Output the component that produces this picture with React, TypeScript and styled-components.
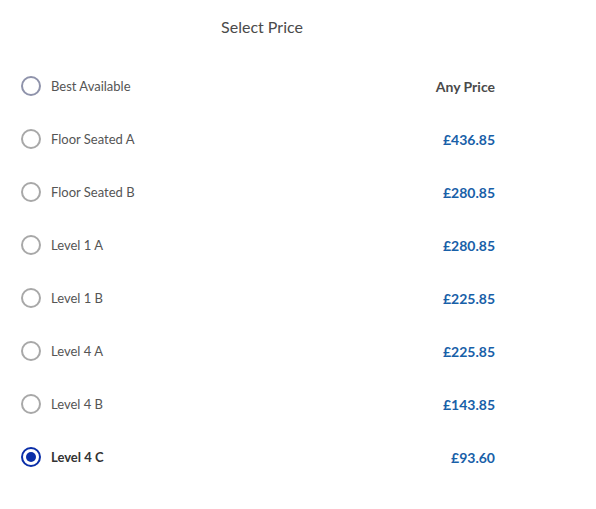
import React, { useState } from "react";
import styled, { createGlobalStyle } from "styled-components";

const prices = [
  { id: "best", name: "Best Available", price: "Any Price" },
  { id: "fsa", name: "Floor Seated A", price: "£436.85" },
  { id: "fsb", name: "Floor Seated B", price: "£280.85" },
  { id: "l1a", name: "Level 1 A", price: "£280.85" },
  { id: "l1b", name: "Level 1 B", price: "£225.85" },
  { id: "l4a", name: "Level 4 A", price: "£225.85" },
  { id: "l4b", name: "Level 4 B", price: "£143.85" },
  { id: "l4c", name: "Level 4 C", price: "£93.60" },
];

const App = () => {
  const [selected, setSelected] = useState("l4c");
  return (
    <>
      <GlobalStyle />
      <Panel>
        <Title>Select Price</Title>
        <List>
          {prices.map((p) => (
            <Row key={p.id} onClick={() => setSelected(p.id)}>
              <Radio
                checked={selected === p.id}
                muted={p.id === "best"}
              />
              <Label active={selected === p.id}>{p.name}</Label>
              <Price any={p.id === "best"}>{p.price}</Price>
            </Row>
          ))}
        </List>
      </Panel>
    </>
  );
};

export default App;

const GlobalStyle = createGlobalStyle`
  body {
    margin: 0;
    background: #fff;
    font-family: Lato, "Open Sans", sans-serif;
  }
`;

const Panel = styled.div`
  width: 524px;
  padding-top: 17px;
`;

const Title = styled.h2`
  margin: 0;
  text-align: center;
  font-size: 16px;
  font-weight: 400;
  color: #4a4a4a;
  line-height: 20px;
`;

const List = styled.ul`
  list-style: none;
  margin: 0;
  padding: 35px 29px 0 21px;
  display: flex;
  flex-direction: column;
  gap: 25px;
`;

const Row = styled.li`
  display: flex;
  align-items: center;
  height: 28px;
  cursor: pointer;
`;

const Radio = styled.span<{ checked: boolean; muted: boolean }>`
  box-sizing: border-box;
  width: 20px;
  height: 20px;
  border-radius: 50%;
  border: 2px solid
    ${(p) => (p.checked ? "#0a2ea8" : p.muted ? "#8f93ab" : "#a8a8a8")};
  display: flex;
  align-items: center;
  justify-content: center;
  flex-shrink: 0;
  &::after {
    content: "";
    display: ${(p) => (p.checked ? "block" : "none")};
    width: 10px;
    height: 10px;
    border-radius: 50%;
    background: #0a2ea8;
  }
`;

const Label = styled.span<{ active: boolean }>`
  margin-left: 10px;
  font-size: 13px;
  color: ${(p) => (p.active ? "#333" : "#555")};
  font-weight: ${(p) => (p.active ? 700 : 400)};
  flex: 1;
`;

const Price = styled.span<{ any: boolean }>`
  font-size: 14px;
  font-weight: 700;
  color: ${(p) => (p.any ? "#4a4a4a" : "#1860a8")};
`;
